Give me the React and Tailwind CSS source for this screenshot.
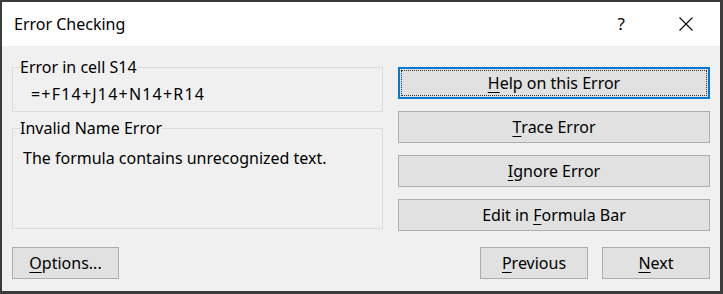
const font = { fontFamily: '"Noto Sans", "Open Sans", sans-serif' };

function Key({ children }) {
  return <span className="underline decoration-1 underline-offset-[3px]">{children}</span>;
}

function DialogButton({ children, className = '' }) {
  return (
    <button className={`flex h-[32px] items-center justify-center border border-[#adadad] bg-[#e1e1e1] text-[16px] text-black ${className}`}>
      {children}
    </button>
  );
}

function GroupBox({ label, className = '', children }) {
  return (
    <fieldset className={`border border-[#dcdcdc] px-[7px] ${className}`}>
      <legend className="px-0 text-[16px] leading-[20px] text-black">{label}</legend>
      {children}
    </fieldset>
  );
}

export default function App() {
  return (
    <div
      className="flex h-[294px] w-[723px] flex-col border-t-2 border-r-[3px] border-b-[3px] border-l-2 border-[#3c3c3c] bg-[#f0f0f0]"
      style={font}
    >
      <div className="flex h-[44px] items-center bg-white pl-[12px] pr-[26px]">
        <span className="flex-1 text-[16px] text-black">Error Checking</span>
        <span className="mr-[53px] text-[17px] text-black">?</span>
        <svg width="16" height="16" viewBox="0 0 16 16" className="text-black">
          <path d="M1.5 1.5 L14.5 14.5 M14.5 1.5 L1.5 14.5" stroke="currentColor" strokeWidth="1.1" fill="none" />
        </svg>
      </div>

      <div className="flex flex-1 gap-[15px] px-[10px]">
        <div className="flex w-[371px] flex-col">
          <GroupBox label="Error in cell S14" className="mt-[11px] h-[55px]">
            <div className="pl-[11px] pt-[7px] text-[16px] leading-[20px] tracking-[1.2px] text-black">=+F14+J14+N14+R14</div>
          </GroupBox>
          <GroupBox label="Invalid Name Error" className="mt-[6px] h-[111px]">
            <div className="pl-[3px] pt-[10px] text-[16px] leading-[20px] text-black">
              The formula contains unrecognized text.
            </div>
          </GroupBox>
        </div>

        <div className="flex w-[312px] flex-col gap-[12px] pt-[21px]">
          <button className="flex h-[32px] border-2 border-[#0078d7] bg-[#e1e1e1] p-[1px] text-[16px] text-black">
            <span className="flex flex-1 items-center justify-center border border-dotted border-[#333]">
              <Key>H</Key>elp on this Error
            </span>
          </button>
          <DialogButton>
            <Key>T</Key>race Error
          </DialogButton>
          <DialogButton>
            <Key>I</Key>gnore Error
          </DialogButton>
          <DialogButton>
            Edit in&nbsp;<Key>F</Key>ormula Bar
          </DialogButton>
        </div>
      </div>

      <div className="flex items-center px-[10px] pb-[12px]">
        <DialogButton className="w-[107px]">
          <Key>O</Key>ptions...
        </DialogButton>
        <div className="flex-1" />
        <div className="flex gap-[14px]">
          <DialogButton className="w-[108px]">
            <Key>P</Key>revious
          </DialogButton>
          <DialogButton className="w-[108px]">
            <Key>N</Key>ext
          </DialogButton>
        </div>
      </div>
    </div>
  );
}
